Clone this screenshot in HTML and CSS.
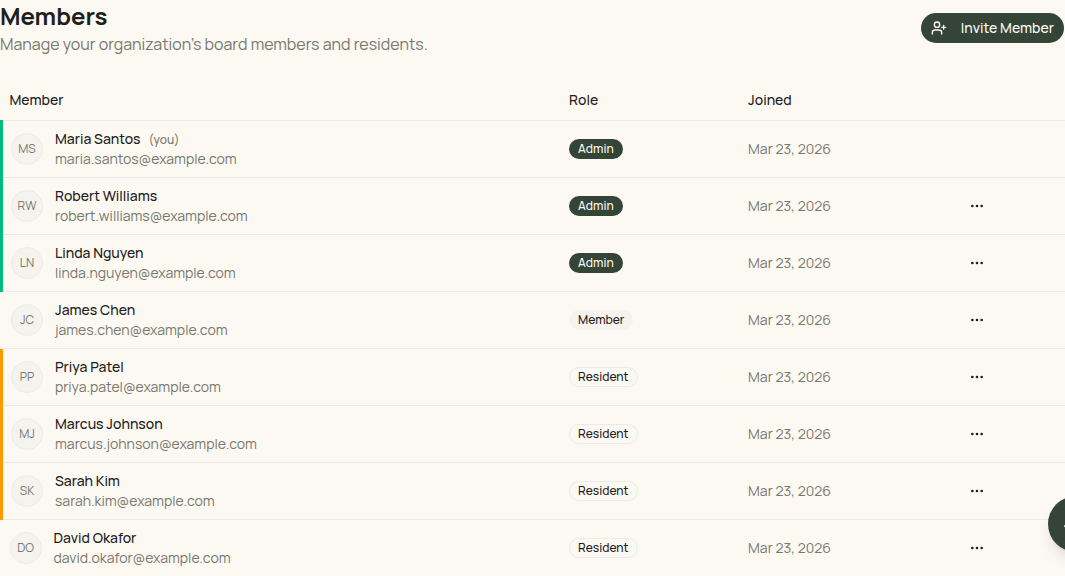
FILE: index.html
```html
<!DOCTYPE html>
<html lang="en">
<head>
    <meta charset="UTF-8">
    <meta name="viewport" content="width=device-width, initial-scale=1.0">
    <title>Members</title>
    <link rel="stylesheet" href="styles.css">
</head>
<body>
    <header class="page-header">
        <div>
            <h1>Members</h1>
            <p class="subtitle">Manage your organization's board members and residents.</p>
        </div>
        <button class="invite">
            <svg class="icon" viewBox="0 0 24 24"><path d="M16 21v-2a4 4 0 0 0-4-4H6a4 4 0 0 0-4 4v2"/><circle cx="9" cy="7" r="4"/><path d="M19 8v6M22 11h-6"/></svg>
            <span>Invite Member</span>
        </button>
    </header>

    <table class="members">
        <colgroup>
            <col class="col-member">
            <col class="col-role">
            <col class="col-joined">
            <col>
        </colgroup>
        <thead>
            <tr><th>Member</th><th>Role</th><th>Joined</th><th></th></tr>
        </thead>
        <tbody id="rows"></tbody>
    </table>

    <button class="chat" aria-label="Assistant">
        <svg class="icon" viewBox="0 0 24 24"><path d="M12 8V4H8"/><rect width="16" height="12" x="4" y="8" rx="2"/><path d="M2 14h2M20 14h2M15 13v2M9 13v2"/></svg>
    </button>

    <script src="members.js"></script>
</body>
</html>
```
FILE: styles.css
```css
* {
    box-sizing: border-box;
}

body {
    margin: 0;
    height: 576px;
    overflow: hidden;
    background-color: #fcf9f2;
    color: #1d211c;
    font-family: Manrope, Inter, sans-serif;
    font-size: 14px;
    line-height: 20px;
}

h1, p {
    margin: 0;
}

h1 {
    font-size: 24px;
    line-height: 32px;
    font-weight: 700;
}

button {
    border: none;
    font: inherit;
    cursor: pointer;
}

.icon {
    width: 16px;
    height: 16px;
    fill: none;
    stroke: currentColor;
    stroke-width: 2;
    stroke-linecap: round;
    stroke-linejoin: round;
}

.page-header {
    display: flex;
    justify-content: space-between;
    align-items: center;
    margin-bottom: 24px;
    padding-right: 1px;
}

.subtitle {
    color: #77786f;
    font-size: 16px;
    line-height: 24px;
}

.invite {
    display: flex;
    align-items: center;
    gap: 14px;
    height: 30px;
    padding: 0 10px;
    border-radius: 15px;
    background-color: #344437;
    color: #fcf9f2;
    font-weight: 500;
}

.members {
    width: 100%;
    table-layout: fixed;
    border-collapse: collapse;
}

.col-member {
    width: 559.6px;
}

.col-role {
    width: 179px;
}

.col-joined {
    width: 213px;
}

th {
    height: 40px;
    padding: 0 8px;
    text-align: left;
    font-weight: 500;
}

td {
    padding: 8px;
}

tr {
    border-bottom: 1px solid #ecebe7;
}

tr.admin {
    border-left: 3px solid #00bc7d;
}

tr.member {
    border-left: 3px solid transparent;
}

tr.resident {
    border-left: 3px solid #fe9a00;
}

.person {
    display: flex;
    align-items: center;
    gap: 12px;
}

.avatar {
    display: flex;
    align-items: center;
    justify-content: center;
    width: 32px;
    height: 32px;
    border: 1px solid #ecebe7;
    border-radius: 50%;
    background-color: #f5f3ed;
    color: #77786f;
    font-size: 12px;
}

.name {
    font-weight: 500;
}

.you {
    margin-left: 8px;
    color: #77786f;
    font-size: 12px;
    line-height: 16px;
}

.email, .joined {
    color: #77786f;
}

.badge {
    display: block;
    width: fit-content;
    height: 20px;
    padding: 0 8px;
    border: 1px solid transparent;
    border-radius: 10px;
    font-size: 12px;
    line-height: 18px;
    font-weight: 500;
}

.badge-admin {
    background-color: #344437;
    color: #fcf9f2;
}

.badge-member {
    background-color: #f5f3ed;
}

.badge-resident {
    border-color: #ecebe7;
}

.more {
    display: flex;
    align-items: center;
    justify-content: center;
    width: 32px;
    height: 32px;
    padding: 0;
    background: none;
    color: #1d211c;
}

.chat {
    position: fixed;
    top: 496px;
    left: 1048px;
    display: flex;
    align-items: center;
    justify-content: center;
    width: 56px;
    height: 56px;
    padding: 0;
    border-radius: 50%;
    background-color: #344437;
    color: #fcf9f2;
    box-shadow: 0 10px 15px -3px rgba(0, 0, 0, 0.1), 0 4px 6px -4px rgba(0, 0, 0, 0.1);
}

.chat .icon {
    width: 26px;
    height: 26px;
}
```
FILE: members.js
```js
const members = [
    { name: 'Maria Santos', email: 'maria.santos', role: 'Admin', bar: 'admin', you: true },
    { name: 'Robert Williams', email: 'robert.williams', role: 'Admin', bar: 'admin' },
    { name: 'Linda Nguyen', email: 'linda.nguyen', role: 'Admin', bar: 'admin' },
    { name: 'James Chen', email: 'james.chen', role: 'Member', bar: 'member' },
    { name: 'Priya Patel', email: 'priya.patel', role: 'Resident', bar: 'resident' },
    { name: 'Marcus Johnson', email: 'marcus.johnson', role: 'Resident', bar: 'resident' },
    { name: 'Sarah Kim', email: 'sarah.kim', role: 'Resident', bar: 'resident' },
    { name: 'David Okafor', email: 'david.okafor', role: 'Resident', bar: '' }
];

const dots = '<button class="more" aria-label="Actions"><svg class="icon" viewBox="0 0 24 24"><circle cx="12" cy="12" r="1"/><circle cx="19" cy="12" r="1"/><circle cx="5" cy="12" r="1"/></svg></button>';

document.getElementById('rows').innerHTML = members.map(m => `
    <tr class="${m.bar}">
        <td>
            <div class="person">
                <span class="avatar">${m.name.split(' ').map(w => w[0]).join('')}</span>
                <div>
                    <div class="name">${m.name}${m.you ? '<span class="you">(you)</span>' : ''}</div>
                    <div class="email">${m.email}@example.com</div>
                </div>
            </div>
        </td>
        <td><span class="badge badge-${m.role.toLowerCase()}">${m.role}</span></td>
        <td class="joined">Mar 23, 2026</td>
        <td>${m.you ? '' : dots}</td>
    </tr>`).join('');
```
